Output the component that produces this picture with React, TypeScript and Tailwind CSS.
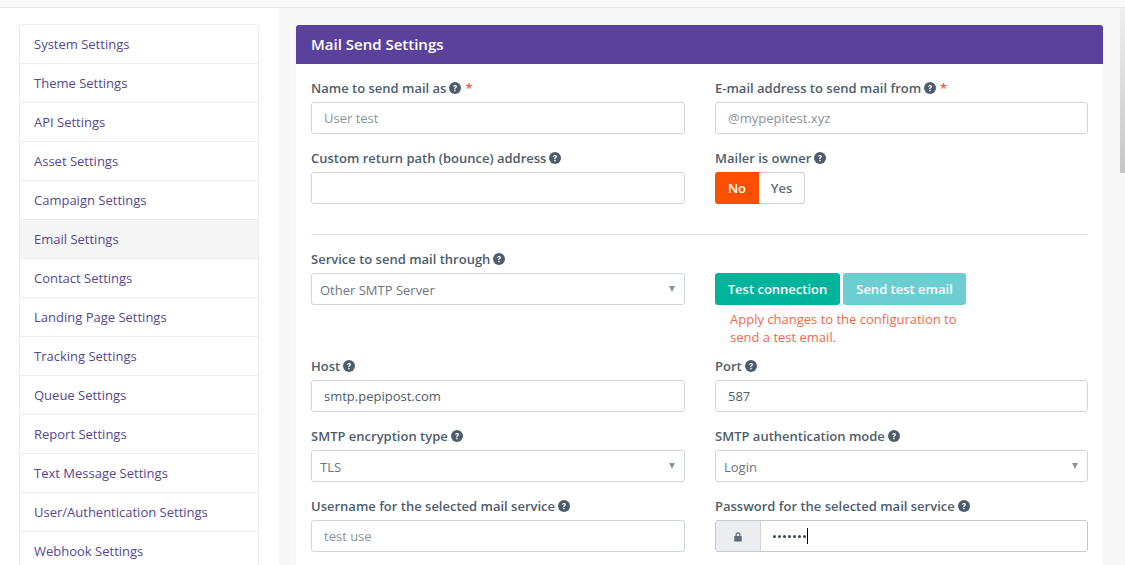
import React from 'react';

const menu = [
  'System Settings',
  'Theme Settings',
  'API Settings',
  'Asset Settings',
  'Campaign Settings',
  'Email Settings',
  'Contact Settings',
  'Landing Page Settings',
  'Tracking Settings',
  'Queue Settings',
  'Report Settings',
  'Text Message Settings',
  'User/Authentication Settings',
  'Webhook Settings',
];

const Help = () => (
  <svg viewBox="0 0 24 24" className="inline-block w-[12px] h-[12px] ml-[3px] align-[-1px]">
    <circle cx="12" cy="12" r="12" fill="#4e5d6c" />
    <path d="M8.2 9.4c.2-2.3 1.8-3.6 3.9-3.6 2.2 0 3.8 1.3 3.8 3.2 0 1.5-.9 2.3-1.9 3-.9.6-1.2 1-1.2 1.9v.3h-2.5v-.6c0-1.4.6-2.1 1.6-2.8.8-.6 1.3-1 1.3-1.7 0-.7-.6-1.2-1.3-1.2-.8 0-1.3.5-1.4 1.5z" fill="#fff" />
    <rect x="10.4" y="15.6" width="2.9" height="2.9" rx=".4" fill="#fff" />
  </svg>
);

const Label = ({ text, required }: { text: string; required?: boolean }) => (
  <label className="block h-[14px] leading-[14px] mb-[7px] text-[13px] font-semibold text-[#4e5d6c] whitespace-nowrap">
    {text}
    <Help />
    {required && <span className="ml-[4px] text-[#f0583c]">*</span>}
  </label>
);

const TextInput = ({ value, placeholder }: { value?: string; placeholder?: string }) => (
  <div className="h-[32px] px-[12px] pt-[1px] flex items-center bg-white border border-[#d0d5da] rounded-[3px] text-[13px]">
    {value && <span className="text-[#4e5d6c]">{value}</span>}
    {placeholder && <span className="text-[#8a929a]">{placeholder}</span>}
  </div>
);

const Select = ({ value }: { value: string }) => (
  <div className="h-[32px] pl-[8px] pr-[9px] flex items-center justify-between bg-white border border-[#d0d5da] rounded-[3px] text-[13px] text-[#6b757f]">
    <span className="pt-[3px]">{value}</span>
    <span className="w-0 h-0 border-x-[3.5px] border-x-transparent border-t-[6px] border-t-[#8a929a]" />
  </div>
);

const App: React.FC = () => {
  return (
    <div className="h-[565px] overflow-hidden flex flex-col bg-white font-['Open_Sans',sans-serif]">
      <div className="h-[8px] shrink-0 bg-[#f8f8f8] border-b border-[#e6e6e6]" />
      <div className="flex flex-1 min-h-0">
        <div className="w-[279px] shrink-0 pl-[19px] pr-[20px] pt-[16px] bg-white">
          <div className="bg-white border border-[#ebedf0] rounded-[3px]">
            {menu.map((item, i) => (
              <div
                key={item}
                className={`pl-[14px] pt-[1px] flex items-center text-[13px] text-[#57478f] ${i > 0 ? 'h-[39px] border-t border-[#ebedf0]' : 'h-[38px]'} ${item === 'Email Settings' ? 'bg-[#f5f5f5]' : ''}`}
              >
                {item}
              </div>
            ))}
          </div>
        </div>
        <div className="flex-1 min-w-0 flex bg-[#f7f7f7]">
          <div className="w-[824px] pl-[17px] pt-[17px] flex flex-col">
            <div className="w-[807px] flex-1 bg-white rounded-t-[3px] shadow-[0_0_1px_rgba(0,0,0,0.15)]">
              <div className="h-[39px] pl-[15px] flex items-center bg-[#5a419b] rounded-t-[3px] text-[15px] font-semibold text-white">
                Mail Send Settings
              </div>
              <div className="px-[15px] pt-[17px]">
                <div className="grid grid-cols-[374px_373px] gap-x-[30px]">
                  <div className="h-[70px]">
                    <Label text="Name to send mail as" required />
                    <TextInput placeholder="User test" />
                  </div>
                  <div className="h-[70px]">
                    <Label text="E-mail address to send mail from" required />
                    <TextInput placeholder="@mypepitest.xyz" />
                  </div>
                  <div>
                    <Label text="Custom return path (bounce) address" />
                    <TextInput />
                  </div>
                  <div>
                    <Label text="Mailer is owner" />
                    <div className="flex h-[32px] w-[90px] text-[13px] font-semibold">
                      <div className="w-[44px] pt-[1px] flex items-center justify-center bg-[#fd4f03] rounded-l-[3px] text-white">No</div>
                      <div className="flex-1 pt-[1px] flex items-center justify-center bg-white border border-l-0 border-[#d0d5da] rounded-r-[3px] text-[#5f6b76]">Yes</div>
                    </div>
                  </div>
                </div>
                <div className="mt-[30px] mb-[17px] border-t border-[#e6e8eb]" />
                <div className="grid grid-cols-[374px_373px] gap-x-[30px]">
                  <div>
                    <Label text="Service to send mail through" />
                    <Select value="Other SMTP Server" />
                  </div>
                  <div className="pt-[21px] h-[107px]">
                    <div className="flex gap-[3px] text-[13px] font-semibold text-white">
                      <div className="h-[32px] w-[125px] pt-[1px] flex items-center justify-center bg-[#00b49c] rounded-[3px]">Test connection</div>
                      <div className="h-[32px] w-[123px] pt-[1px] flex items-center justify-center bg-[#6dced1] rounded-[3px]">Send test email</div>
                    </div>
                    <p className="mt-[5px] pl-[15px] w-[260px] text-[13px] leading-[18px] text-[#ee6a4d]">
                      Apply changes to the configuration to send a test email.
                    </p>
                  </div>
                  <div className="h-[70px]">
                    <Label text="Host" />
                    <TextInput value="smtp.pepipost.com" />
                  </div>
                  <div className="h-[70px]">
                    <Label text="Port" />
                    <TextInput value="587" />
                  </div>
                  <div className="h-[70px]">
                    <Label text="SMTP encryption type" />
                    <Select value="TLS" />
                  </div>
                  <div className="h-[70px]">
                    <Label text="SMTP authentication mode" />
                    <Select value="Login" />
                  </div>
                  <div>
                    <Label text="Username for the selected mail service" />
                    <TextInput placeholder="test use" />
                  </div>
                  <div>
                    <Label text="Password for the selected mail service" />
                    <div className="flex h-[32px] border border-[#c4c9ce] rounded-[3px] overflow-hidden">
                      <div className="w-[45px] flex items-center justify-center bg-[#ebedf0] border-r border-[#d0d5da]">
                        <svg viewBox="0 0 16 16" className="w-[10px] h-[11px]">
                          <path d="M4 7V5a4 4 0 0 1 8 0v2h1a1 1 0 0 1 1 1v7a1 1 0 0 1-1 1H3a1 1 0 0 1-1-1V8a1 1 0 0 1 1-1zm2 0h4V5a2 2 0 0 0-4 0z" fill="#5f6b76" />
                        </svg>
                      </div>
                      <div className="flex-1 pl-[12px] flex items-center bg-white text-[13px] text-[#4e5d6c]">
                        <span className="flex gap-[2px]">
                          {[0, 1, 2, 3, 4, 5, 6].map(i => (
                            <span key={i} className="w-[3px] h-[3px] rounded-full bg-[#3f4a55]" />
                          ))}
                        </span>
                        <span className="ml-[1px] w-[1px] h-[16px] bg-black" />
                      </div>
                    </div>
                  </div>
                </div>
              </div>
            </div>
          </div>
          <div className="flex-1 min-w-0 flex justify-end">
            <div className="w-[5px] h-[165px] bg-linear-to-b from-[#efefef] to-[#c6c6c6]" />
          </div>
        </div>
      </div>
    </div>
  );
};

export default App;
